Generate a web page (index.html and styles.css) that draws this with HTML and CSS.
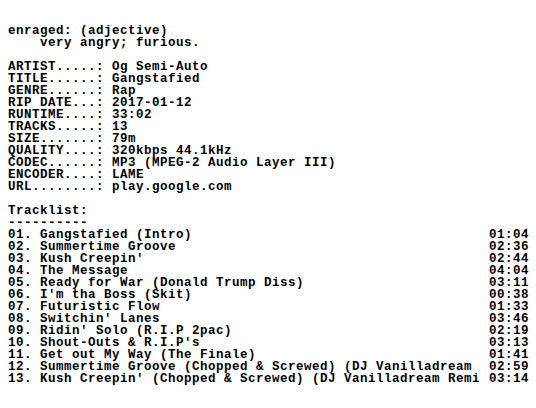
FILE: index.html
```html
<!DOCTYPE html>
<html>
<head>
<meta charset="utf-8">
<link rel="stylesheet" href="styles.css">
</head>
<body>
<main class="nfo">
<pre class="block">enraged: (adjective)
    very angry; furious.</pre>
<pre class="block">ARTIST.....: Og Semi-Auto
TITLE......: Gangstafied
GENRE......: Rap
RIP DATE...: 2017-01-12
RUNTIME....: 33:02
TRACKS.....: 13
SIZE.......: 79m
QUALITY....: 320kbps 44.1kHz
CODEC......: MP3 (MPEG-2 Audio Layer III)
ENCODER....: LAME
URL........: play.google.com</pre>
<section class="block">
<pre class="line">Tracklist:
----------</pre>
<ol class="tracks">
<li class="track"><span>01. Gangstafied (Intro)</span><span>01:04</span></li>
<li class="track"><span>02. Summertime Groove</span><span>02:36</span></li>
<li class="track"><span>03. Kush Creepin'</span><span>02:44</span></li>
<li class="track"><span>04. The Message</span><span>04:04</span></li>
<li class="track"><span>05. Ready for War (Donald Trump Diss)</span><span>03:11</span></li>
<li class="track"><span>06. I'm tha Boss (Skit)</span><span>00:38</span></li>
<li class="track"><span>07. Futuristic Flow</span><span>01:33</span></li>
<li class="track"><span>08. Switchin' Lanes</span><span>03:46</span></li>
<li class="track"><span>09. Ridin' Solo (R.I.P 2pac)</span><span>02:19</span></li>
<li class="track"><span>10. Shout-Outs &amp; R.I.P's</span><span>03:13</span></li>
<li class="track"><span>11. Get out My Way (The Finale)</span><span>01:41</span></li>
<li class="track"><span>12. Summertime Groove (Chopped &amp; Screwed) (DJ Vanilladream</span><span>02:59</span></li>
<li class="track"><span>13. Kush Creepin' (Chopped &amp; Screwed) (DJ Vanilladream Remi</span><span>03:14</span></li>
</ol>
</section>
</main>
</body>
</html>
```
FILE: styles.css
```css
html, body {
  background: #fff;
}
body {
  margin: 0;
  padding: 25px 7px 8px 8px;
  color: #000;
  font-family: "Liberation Mono", "DejaVu Sans Mono", monospace;
  font-weight: bold;
  font-size: 12.5px;
  letter-spacing: 0.5px;
  line-height: 12px;
}
.nfo {
  display: flex;
  flex-direction: column;
  gap: 12px;
}
.block {
  margin: 0;
  font: inherit;
}
pre {
  margin: 0;
  font: inherit;
  white-space: pre;
}
.tracks {
  list-style: none;
  margin: 0;
  padding: 0;
}
.track {
  display: flex;
  justify-content: space-between;
  white-space: pre;
}
```
